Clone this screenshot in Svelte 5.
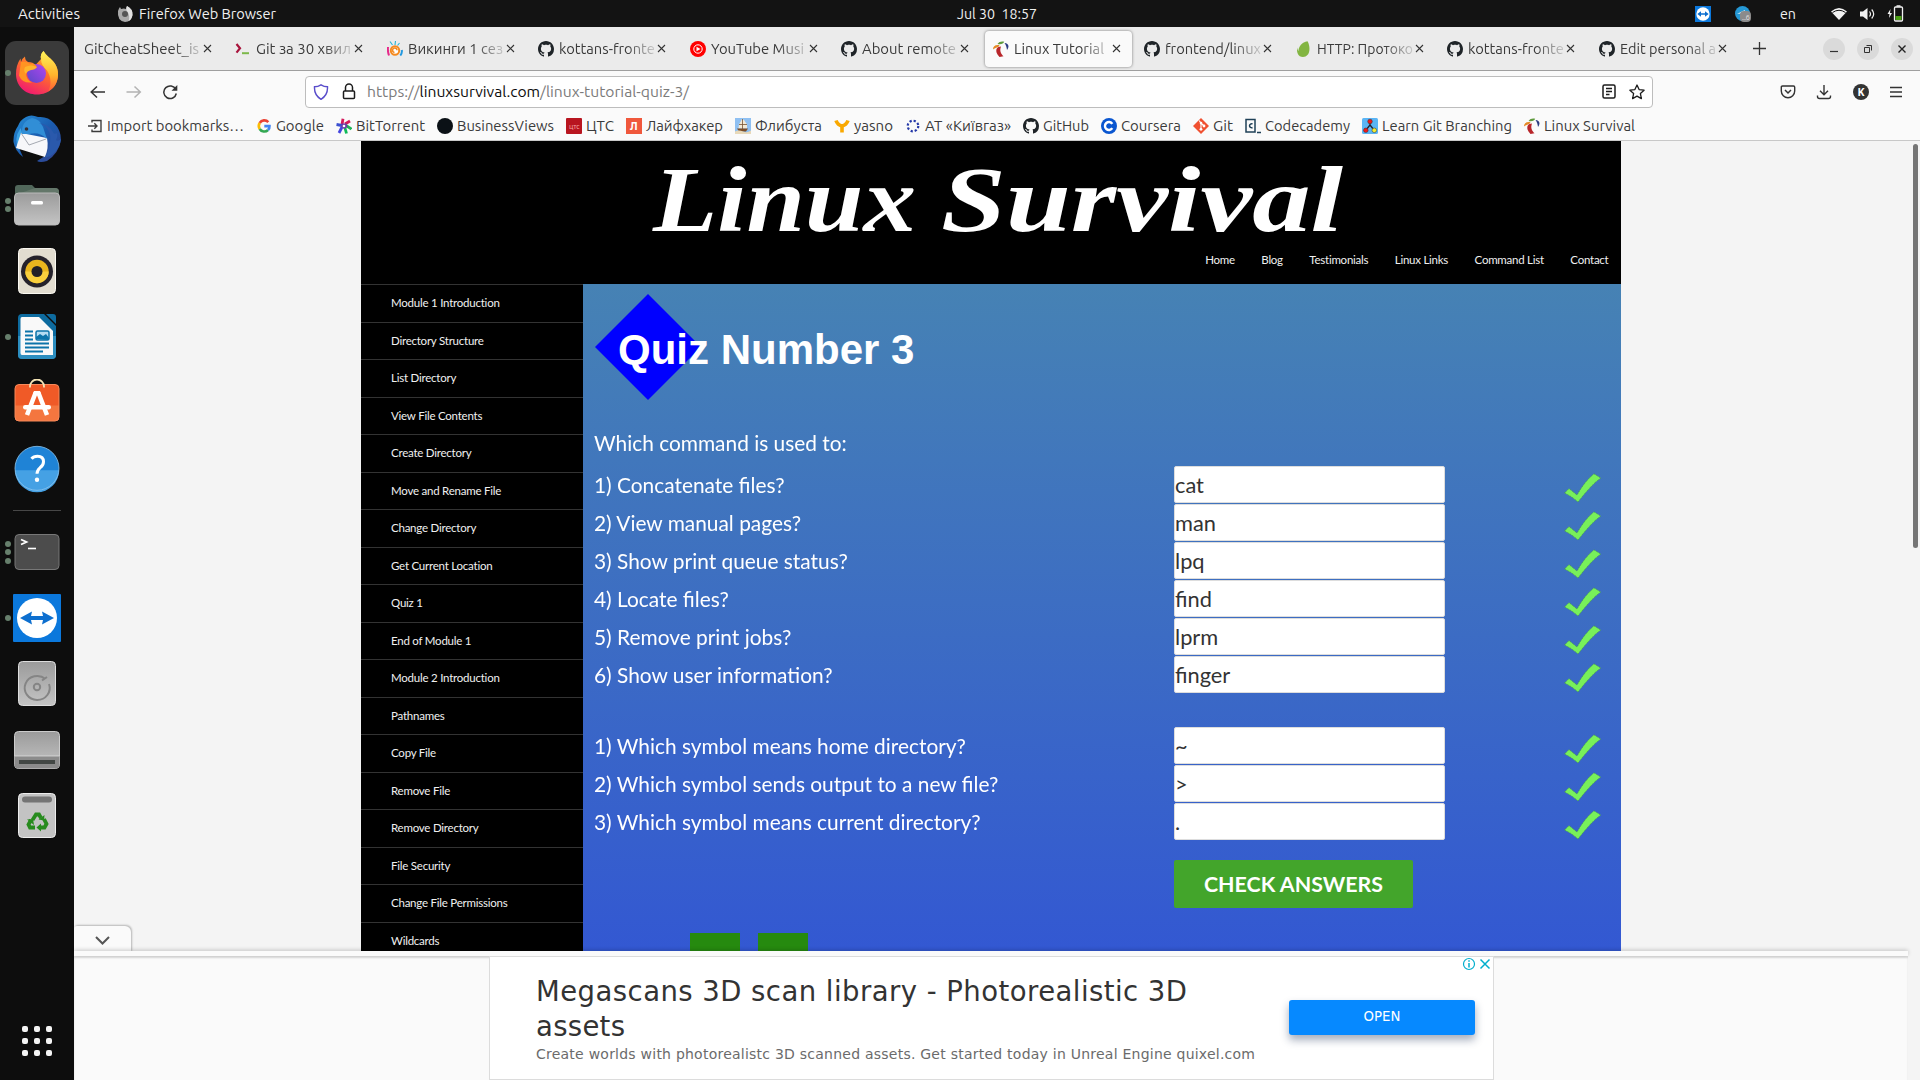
<script>
  const tabs = [
    { t: 'GitCheatSheet_is', w: 115, i: '' },
    { t: 'Git за 30 хвил', w: 95, i: 'prompt' },
    { t: 'Викинги 1 сез', w: 95, i: 'viking' },
    { t: 'kottans-fronte', w: 96, i: 'github' },
    { t: 'YouTube Musi', w: 93, i: 'yt' },
    { t: 'About remote', w: 94, i: 'github' },
    { t: 'Linux Tutorial', w: 90, i: 'palm', active: true },
    { t: 'frontend/linux', w: 96, i: 'github' },
    { t: 'HTTP: Протоко', w: 96, i: 'leaf' },
    { t: 'kottans-fronte', w: 96, i: 'github' },
    { t: 'Edit personal a', w: 96, i: 'github' }
  ];
  const bookmarks = [
    { t: 'Import bookmarks…', w: 137, i: 'import' },
    { t: 'Google', w: 48, i: 'google' },
    { t: 'BitTorrent', w: 69, i: 'star6' },
    { t: 'BusinessViews', w: 97, i: 'black' },
    { t: 'ЦТС', w: 28, i: 'cts' },
    { t: 'Лайфхакер', w: 77, i: 'life' },
    { t: 'Флибуста', w: 67, i: 'ship' },
    { t: 'yasno', w: 39, i: 'yasno' },
    { t: 'АТ «Київгаз»', w: 86, i: 'dots' },
    { t: 'GitHub', w: 46, i: 'github' },
    { t: 'Coursera', w: 60, i: 'coursera' },
    { t: 'Git', w: 20, i: 'git' },
    { t: 'Codecademy', w: 85, i: 'code' },
    { t: 'Learn Git Branching', w: 130, i: 'branch' },
    { t: 'Linux Survival', w: 91, i: 'palm' }
  ];
  const dockTop = [
    { n: 'firefox', dots: 1 }, { n: 'bird', dots: 0 }, { n: 'files', dots: 2 },
    { n: 'music', dots: 0 }, { n: 'writer', dots: 1 }, { n: 'store', dots: 0 }, { n: 'help', dots: 0 }
  ];
  const dockBottom = [
    { n: 'term', dots: 3 }, { n: 'tv', dots: 1 }, { n: 'disk', dots: 0 }, { n: 'drive', dots: 0 }, { n: 'trash', dots: 0 }
  ];
  const nav = ['Home', 'Blog', 'Testimonials', 'Linux Links', 'Command List', 'Contact'];
  const lessons = [
    'Module 1 Introduction', 'Directory Structure', 'List Directory', 'View File Contents', 'Create Directory',
    'Move and Rename File', 'Change Directory', 'Get Current Location', 'Quiz 1', 'End of Module 1',
    'Module 2 Introduction', 'Pathnames', 'Copy File', 'Remove File', 'Remove Directory', 'File Security',
    'Change File Permissions', 'Wildcards'
  ];
  const groups = [
    [
      ['1) Concatenate files?', 'cat'], ['2) View manual pages?', 'man'], ['3) Show print queue status?', 'lpq'],
      ['4) Locate files?', 'find'], ['5) Remove print jobs?', 'lprm'], ['6) Show user information?', 'finger']
    ],
    [
      ['1) Which symbol means home directory?', '~'], ['2) Which symbol sends output to a new file?', '>'],
      ['3) Which symbol means current directory?', '.']
    ]
  ];
</script>

{#snippet fit(t, w)}
  <svg class="fit" width={w} height="22"><text x="0" y="16" textLength={w} lengthAdjust="spacingAndGlyphs">{t}</text></svg>
{/snippet}

{#snippet icon(n)}
  <svg class="ico" width="16" height="16" viewBox="0 0 16 16">
    {#if n === 'github'}
      <path fill="#1f2428" fill-rule="evenodd" d="M8 0C3.58 0 0 3.58 0 8c0 3.54 2.29 6.53 5.47 7.59.4.07.55-.17.55-.38 0-.19-.01-.82-.01-1.49-2.01.37-2.53-.49-2.69-.94-.09-.23-.48-.94-.82-1.13-.28-.15-.68-.52-.01-.53.63-.01 1.08.58 1.23.82.72 1.21 1.87.87 2.33.66.07-.52.28-.87.51-1.07-1.78-.2-3.64-.89-3.64-3.95 0-.87.31-1.59.82-2.15-.08-.2-.36-1.02.08-2.12 0 0 .67-.21 2.2.82.64-.18 1.32-.27 2-.27s1.36.09 2 .27c1.53-1.04 2.2-.82 2.2-.82.44 1.1.16 1.92.08 2.12.51.56.82 1.27.82 2.15 0 3.07-1.87 3.75-3.65 3.95.29.25.54.73.54 1.48 0 1.07-.01 1.93-.01 2.2 0 .21.15.46.55.38A8.01 8.01 0 0 0 16 8c0-4.42-3.58-8-8-8z" />
    {:else if n === 'prompt'}
      <path d="M1.5 3 5 7.3 1.5 11.6" fill="none" stroke="#a8143c" stroke-width="2.2" /><path d="M7 12.2h7" stroke="#7cb84a" stroke-width="2" />
    {:else if n === 'viking'}
      <path d="M3 .5 5.500 4M8.500 0 8 4M12.500 2l-2 2.500" stroke="#23b5d3" stroke-width="1.1" />
      <circle cx="8" cy="9.500" r="4.200" fill="#fff" stroke="#f58a1f" stroke-width="2" />
      <path d="M7.500 11.500a2.200 2.200 0 1 1 2.500-2.200" fill="none" stroke="#f58a1f" stroke-width="1.500" />
      <path d="M1 6q-.500 4.500 1 8.500" fill="none" stroke="#e6298a" stroke-width="2" /><path d="M14.800 9q.500 3.500-1.500 5.500" fill="none" stroke="#2098e0" stroke-width="2" />
    {:else if n === 'yt'}
      <circle cx="8" cy="8" r="8" fill="#f00" /><circle cx="8" cy="8" r="4.2" fill="none" stroke="#fff" stroke-width="1" /><path d="M6.5 5.7 10.4 8l-3.9 2.3z" fill="#fff" />
    {:else if n === 'palm'}
      <path d="M4.500 3C6 .5 9 0 11.200.8 10.500 2.800 8 3.800 4.500 3z" fill="#5f9a3c" />
      <path d="M0 8.500C0 5 2.500 3.500 6.500 4.200 5.500 6.800 3 6 0 8.500z" fill="#e58a26" />
      <path d="M3.500 8c1-1.800 2.500-2.500 4.500-2.500C6.500 9.500 7.500 12.500 10.500 15.200L6.500 16C3.500 13 2.800 10.500 3.500 8z" fill="#b8262a" />
      <path d="M11.500 2c3.500 0 5.500 3 2.500 7C13.700 6 13 4 11.500 2z" fill="#2c3c83" />
    {:else if n === 'leaf'}
      <path d="M11.500.2c3 5 3.500 15.300-4.500 15.800C2 16 .4 11 1.200 6.500c.200 1.500.5 2.500 1.300 3.500C2.500 5.500 6 1 11.500.2z" fill="#82b541" />
    {:else if n === 'import'}
      <path d="M5 4.500V2.500h9v11H5v-2M1 8h9M7.300 5.200 10 8l-2.700 2.800" fill="none" stroke="#3c3c3c" stroke-width="1.400" />
    {:else if n === 'google'}
      <g fill="none" stroke-width="2.600"><path d="M12.300 4.200A5.300 5.300 0 0 0 3.700 5" stroke="#ea4335" /><path d="M3.700 5a5.600 5.600 0 0 0 0 6" stroke="#fbbc05" /><path d="M3.700 11a5.300 5.300 0 0 0 8.300 1" stroke="#34a853" /><path d="M12 12a5 5 0 0 0 1.500-3.900H8.300" stroke="#4285f4" /></g>
    {:else if n === 'star6'}
      <g fill="none" stroke-width="2.800" stroke-linejoin="miter">
        <path d="M7 .8 6 6.500" stroke="#d41b5c" /><path d="M.5 6.500 6 7.500" stroke="#3a50d0" /><path d="M9 6l5-3" stroke="#d41b5c" />
        <path d="M10 7.500l5.500 3.500" stroke="#20b357" /><path d="M6 9l-3 6" stroke="#4545df" /><path d="M9 10l1.500 5.500" stroke="#10ba5a" />
      </g>
      <path d="M6 5.500h4.500l1 3.500-3.500 2L5 8.500z" fill="#6a3ba8" /><circle cx="8" cy="8" r="1.300" fill="#fff" />
    {:else if n === 'black'}
      <circle cx="8" cy="8" r="8" fill="#0b1116" />
    {:else if n === 'cts'}
      <rect width="16" height="16" rx="1" fill="#b8151f" /><text class="mini" x="3" y="11" font-size="7" fill="#f3a0a0">цтс</text>
    {:else if n === 'life'}
      <rect width="16" height="16" fill="#f0583c" /><text class="mini bold" x="4" y="12" font-size="10.500" fill="#fff">Л</text>
    {:else if n === 'ship'}
      <rect width="16" height="16" fill="#8fc0f2" /><path d="M7 1l2 1 3 4.500v4H3.500l.5-4z" fill="#f2e9d5" /><path d="M7.500 1v10M4 6.500h8" stroke="#775434" stroke-width=".800" /><path d="M2 10.500h11l-2 3H4z" fill="#7c4e28" /><path d="M0 13.500q4-2 8 0t8-1v3.500H0z" fill="#e8d9ba" />
    {:else if n === 'yasno'}
      <path d="M2 2.500q1.500 4.500 6 5.500 4.500-1 6-5.500M8 8v6.500" fill="none" stroke="#f9a800" stroke-width="3.600" />
    {:else if n === 'dots'}
      <circle cx="8" cy="8" r="5.300" fill="none" stroke="#2438a8" stroke-width="2.200" stroke-dasharray="2.200 1.960" />
    {:else if n === 'coursera'}
      <circle cx="8" cy="8" r="8" fill="#0a56d0" /><path d="M11.300 5.800a4 4 0 1 0 0 4.400" fill="none" stroke="#fff" stroke-width="2.400" />
    {:else if n === 'git'}
      <path d="M8 0l8 8-8 8-8-8z" fill="#f05030" /><path d="M6 2.500 8 5v6M8 5l3 3" stroke="#fff" stroke-width="1.100" fill="none" /><circle cx="8" cy="11.300" r="1.400" fill="#fff" /><circle cx="11" cy="8" r="1.400" fill="#fff" /><circle cx="8" cy="5" r="1.300" fill="#fff" />
    {:else if n === 'code'}
      <rect x="1" y="1.500" width="9" height="12.500" fill="none" stroke="#1f4057" stroke-width="1.500" /><path d="M7.500 6a2 2 0 1 0 0 3.500M12 14.500h4" fill="none" stroke="#1f4057" stroke-width="1.500" />
    {:else if n === 'branch'}
      <rect width="16" height="16" rx="1.500" fill="#5bb5f5" /><path d="M8 4v4M8 7l-4 5M8 7l4 5" stroke="#223" stroke-width="1.300" /><circle cx="8" cy="3.500" r="2.300" fill="#f01818" stroke="#333" stroke-width=".500" /><circle cx="3.800" cy="12.300" r="2.300" fill="#f01818" stroke="#333" stroke-width=".500" /><circle cx="12.300" cy="12.300" r="2.300" fill="#f5ee30" stroke="#333" stroke-width=".500" />
    {/if}
  </svg>
{/snippet}

{#snippet dockIcon(n)}
  <svg width="48" height="48" viewBox="0 0 48 48">
    {#if n === 'firefox'}
      <path d="M28 10Q27 5 30.500 2q2 3.500 5 6c5 4 9.500 9 9.500 17.500C45 37 36 45.500 24 45.500S3 37 3 25q0-9 4.500-15.500l.5 3.500Q9.500 9 12 7.500q0 4 3 5.500 5 0 7.500 3z" fill="url(#fx)" />
      <path d="M28 10Q27 5 30.500 2q2 3.500 5 6c5 4 9.500 9 9.500 17.500 0 8-4 14-10 17 4-6 3-15-1-21-4-4-6-7-6-11.500z" fill="url(#fy)" />
      <circle cx="23.500" cy="24.500" r="9.500" fill="url(#fp)" />
      <path d="M8 13q6-1 9 2 4-1 6 1.500 2 2-2 3l-5 1q-3 1-3 4 0 6 6 9-10 1-13-7z" fill="#ff9422" />
      <path d="M12 18q6-3 12 0-2 3-6 3-4 1-5 4-3-3-1-7z" fill="#ffb52c" />
    {:else if n === 'bird'}
      <path d="M13 2q5-3 12 0 10-1 16 6 7 7 7 17-2 13-14 21-7 2-10 0l8-5L6 33l4 9Q2 36 .5 27 0 18 5 11 7 5 13 2z" fill="url(#tb)" />
      <path d="M6 35q-6-11 1.500-22l3 9z" fill="#3ba3e4" />
      <path d="M8 18 34 23q2 10-2 19L3 33z" fill="#f7f7fa" />
      <path d="M8 18l8 12 17-6" fill="none" stroke="#a5a9b2" stroke-width="1" />
      <path d="M9 19Q8 6 19 3q8 1 11 9l4 12q-8-8-18-5-4 0-7 0z" fill="#318ed6" />
      <path d="M26 8q13 5 11 19-1 9-5 15 4 1 8-3 7-6 8-15-3 3-5 1 2-3 1-7-3 2-4-1-3-7-14-9z" fill="#2a59ac" />
      <circle cx="13.500" cy="14" r="1.800" fill="#362c30" />
    {:else if n === 'files'}
      <path d="M2 7q0-3 3-3h14l3 3h20q4 0 4 4v8H2z" fill="#51675a" /><path d="M22 7h20q4 0 4 4v5H2v-2z" fill="#64776a" />
      <rect x="1.500" y="12" width="45" height="32" rx="4" fill="url(#gr)" stroke="#bbb" /><rect x="18" y="20" width="12" height="3.500" rx="1.500" fill="#fff" />
    {:else if n === 'music'}
      <rect x="5.500" y="1.500" width="37" height="45" rx="4" fill="#e2ddd0" stroke="#faf8f1" /><circle cx="24" cy="24.500" r="16" fill="#25222b" /><circle cx="24" cy="24.500" r="11.700" fill="#e9b51e" /><path d="M12.300 24.500a11.700 11.700 0 0 0 23.400 0z" fill="#f9cf3d" /><circle cx="24" cy="24.500" r="5.500" fill="#222027" />
    {:else if n === 'writer'}
      <path d="M9 1h22l12 12v29q0 4-4 4H9q-4 0-4-4V5q0-4 4-4z" fill="#0d6b9f" /><path d="M5 23h38v19q0 4-4 4H9q-4 0-4-4z" fill="#2c8ec0" /><path d="M33 1h7q3 0 3 3v7z" fill="#0d6b9f" />
      <path d="M9 4h17l14 14v24H9q-1.500 0-1.500-2V6Q7.500 4 9 4z" fill="#f9f9f9" />
      <path d="M12 18.500h8M12 22.500h8M12 26.500h8M12 30.500h24M12 34.500h24M12 38.500h18" stroke="#0c74aa" stroke-width="2" /><rect x="23" y="18" width="13" height="9" rx="1.500" fill="#b5dcf2" stroke="#0c74aa" stroke-width="1.500" /><path d="M23 26v-2l4-3 3 2 3-2 3 4v2z" fill="#0c74aa" />
    {:else if n === 'store'}
      <g transform="translate(0 -.5)"><rect x="2" y="6" width="44" height="36.500" rx="4" fill="#f05a27" /><path d="M2 27h44v11.500q0 4-4 4H6q-4 0-4-4z" fill="#f4763f" /><rect x="2" y="6" width="44" height="36.500" rx="4" fill="none" stroke="#f6895a" />
      <path d="M17 9V8a7 7 0 0 1 14 0v1" fill="none" stroke="#f3e3b5" stroke-width="1.800" /><path d="M14 36.500 22.700 14M25.300 14 34 36.500" fill="none" stroke="#fff" stroke-width="4.500" /><path d="M21 12.500h6l1 3h-8z" fill="#fff" /><rect x="10" y="26.500" width="28" height="4.500" rx="2.200" fill="#fff" /></g>
    {:else if n === 'help'}
      <g transform="translate(0 -.7)"><circle cx="24" cy="24" r="22" fill="#1f83d6" /><path d="M2 26a22 22 0 0 0 44 0z" fill="#45a1e4" /><circle cx="24" cy="24" r="22" fill="none" stroke="#8bc4ee" stroke-width=".800" />
      <path d="M18.500 14.500q2-2.500 6-2.500 6 0 6 5.500 0 3.500-3.500 6-3 2.500-3 6" fill="none" stroke="#fff" stroke-width="3" /><circle cx="24" cy="35.500" r="2.200" fill="#fff" /></g>
    {:else if n === 'term'}
      <rect x="2" y="6.500" width="44" height="35" rx="4" fill="#4c4c4c" stroke="#777" /><path d="M8 11.500l5.500 2.500L8 16.500" fill="none" stroke="#fff" stroke-width="1.800" /><path d="M15 20.500h8" stroke="#fff" stroke-width="1.600" />
    {:else if n === 'tv'}
      <rect width="48" height="48" rx="1" fill="#0b78dc" /><circle cx="24" cy="24" r="20" fill="#fff" /><path d="M7 24l12-6.500-1 4.500h12l-1-4.500L41 24l-12 6.500 1-4.500H18l1 4.500z" fill="#0d6fcf" />
    {:else if n === 'disk'}
      <rect x="5.500" y="1.500" width="37" height="44" rx="4" fill="url(#gr)" stroke="#ddd" /><path d="M32.500 19A12.500 12 0 1 0 36 24M29 20.500l5-3.500" fill="none" stroke="#858585" stroke-width="2" /><circle cx="24" cy="27" r="3.200" fill="none" stroke="#858585" stroke-width="2" />
    {:else if n === 'drive'}
      <rect x="1.500" y="5.500" width="45" height="37" rx="4" fill="url(#gr)" stroke="#ccc" /><path d="M1.500 30h45v8.500q0 4-4 4h-37q-4 0-4-4z" fill="#8b8b8b" /><path d="M1.500 30h45" stroke="#ddd" stroke-width=".800" /><path d="M6 36h36" stroke="#424744" stroke-width="4" />
    {:else if n === 'trash'}
      <rect x="5.500" y="1.500" width="37" height="44" rx="4" fill="#c3c3c3" stroke="#ececec" /><rect x="9" y="4.500" width="30" height="6" rx="3" fill="#757575" />
      <g fill="none" stroke="#278b1e" stroke-width="3.800"><path d="M19.500 28l3.500-5.500h3l2 3.500" /><path d="M31 27l2.500 5-2 3.500H26" /><path d="M22 35.500h-5l-1.500-3L18 28" /></g><path d="M25.500 27.500l5.500 1 .500-5.500zM28 31.500v8l-4.500-4zM14 27.500l6-.500 1 6z" fill="#278b1e" />
    {/if}
  </svg>
{/snippet}

<div class="screen">
  <svg class="defs" width="0" height="0">
    <defs>
      <linearGradient id="fx" x1=".8" y1="0" x2=".3" y2="1"><stop offset="0" stop-color="#ffc32d" /><stop offset=".5" stop-color="#ff6a2d" /><stop offset="1" stop-color="#f01872" /></linearGradient>
      <linearGradient id="fy" x1="0" y1="0" x2="0" y2="1"><stop offset="0" stop-color="#fff45a" /><stop offset=".6" stop-color="#ffb32c" /><stop offset="1" stop-color="#ff5a35" /></linearGradient>
      <linearGradient id="fp" x1="1" y1="0" x2="0" y2="1"><stop offset="0" stop-color="#b345f0" /><stop offset="1" stop-color="#5a48c8" /></linearGradient>
      <linearGradient id="tb" x1="0" y1="0" x2="1" y2="1"><stop offset="0" stop-color="#258fd8" /><stop offset=".5" stop-color="#1b5bae" /><stop offset="1" stop-color="#35418e" /></linearGradient>
      <linearGradient id="gr" x1="0" y1="0" x2="0" y2="1"><stop offset="0" stop-color="#9b9b9b" /><stop offset="1" stop-color="#c4c4c4" /></linearGradient>
    </defs>
  </svg>

  <header class="panel">
    <div class="left">
      {@render fit('Activities', 62)}
      <svg class="foxmini" width="16" height="16" viewBox="0 0 16 16"><path d="M1 5q1-3 2-4l1 2q3-1 5 0 0-2 1-3 6 3 5.500 9-1 7-7.500 7Q0 15 1 5z" fill="#aaa" /><path d="M10 0q6 3 5.500 9-1 5-4 6 2-5-1-9-2-2-.500-6z" fill="#e2e2e2" /><circle cx="8" cy="8" r="3" fill="#555" /></svg>
      {@render fit('Firefox Web Browser', 137)}
    </div>
    <div class="clock">{@render fit('Jul 30  18:57', 80)}</div>
    <div class="tray">
      <svg width="16" height="16" viewBox="0 0 48 48"><rect width="48" height="48" fill="#0b78dc" /><circle cx="24" cy="24" r="20" fill="#fff" /><path d="M7 24l11-8v6h12v-6l11 8-11 8v-6H18v6z" fill="#0d6fcf" /></svg>
      <svg class="tg" width="16" height="16" viewBox="0 0 16 16"><circle cx="7.500" cy="7.500" r="7.500" fill="#2598d5" /><path d="M2 8l8-4-1 3z" fill="#fff" /><rect x="5" y="5" width="11" height="11" rx="4" fill="#8b8b8b" /><text class="mini" x="7" y="14" font-size="7" fill="#ddd">..6</text></svg>
      <span class="lang">{@render fit('en', 16)}</span>
      <svg class="wifi" width="16" height="16" viewBox="0 0 16 16"><path d="M0 5.500Q8-1.500 16 5.500L8 14z" fill="#f2f2f2" /><path d="M1.500 6.500q6.500-4.500 13 0" fill="none" stroke="#131313" stroke-width="1" /></svg>
      <svg class="vol" width="16" height="16" viewBox="0 0 16 16"><path d="M0 5.500h3L7.500 2v12L3 10.500H0z" fill="#f2f2f2" /><path d="M9.500 5.500q2 2.500 0 5M11.700 3.500q4 4.500 0 9" fill="none" stroke="#f2f2f2" stroke-width="1.200" /></svg>
      <svg class="bat" width="17" height="17" viewBox="0 0 17 17"><path d="M3.500 4 .5 9h2l-.5 4 3-5H3z" fill="#f2f2f2" /><rect x="7.500" y="2" width="8" height="14" rx="1" fill="none" stroke="#f2f2f2" stroke-width="1.300" /><path d="M9.500 1h4" stroke="#f2f2f2" stroke-width="1.500" /><rect x="8.500" y="11" width="6" height="4" fill="#4ba014" /></svg>
    </div>
  </header>

  <div class="desk">
    <aside class="dock">
      {#each dockTop as d, k}
        <div class="tile" class:on={k === 0}><span class="dots">{#each Array(d.dots) as _}<i></i>{/each}</span>{@render dockIcon(d.n)}</div>
      {/each}
      <hr />
      {#each dockBottom as d}
        <div class="tile"><span class="dots">{#each Array(d.dots) as _}<i></i>{/each}</span>{@render dockIcon(d.n)}</div>
      {/each}
      <div class="apps">{#each Array(9) as _}<i></i>{/each}</div>
    </aside>

    <main class="browser">
      <div class="tabs">
        {#each tabs as tab}
          <div class="tab" class:active={tab.active}>
            {#if tab.i}{@render icon(tab.i)}{/if}
            <span class="label">{@render fit(tab.t, tab.w)}</span>
            <svg class="x" width="9" height="9" viewBox="0 0 9 9"><path d="M1 1l7 7M8 1 1 8" stroke="#333" stroke-width="1.100" /></svg>
          </div>
        {/each}
        <svg class="plus" width="13" height="13" viewBox="0 0 13 13"><path d="M6.500 0v13M0 6.500h13" stroke="#333" stroke-width="1.300" /></svg>
        <div class="win">
          <span><svg width="10" height="10"><path d="M1 7.500h8" stroke="#333" stroke-width="1.200" /></svg></span>
          <span><svg width="10" height="10"><path d="M1.500 3.500h5v5h-5zM3.500 1.500h5v5" fill="none" stroke="#333" /></svg></span>
          <span><svg width="10" height="10"><path d="M1.500 1.500l7 7M8.500 1.500l-7 7" stroke="#222" stroke-width="1.400" /></svg></span>
        </div>
      </div>

      <div class="toolbar">
        <svg class="back" width="16" height="16" viewBox="0 0 16 16"><path d="M15 8H1.500M7 2.500 1.200 8 7 13.500" fill="none" stroke="#333" stroke-width="1.500" /></svg>
        <svg class="fwd" width="16" height="16" viewBox="0 0 16 16"><path d="M.5 8H14M8.500 2.500 14.300 8l-5.800 5.500" fill="none" stroke="#b3b3b3" stroke-width="1.500" /></svg>
        <svg class="reload" width="16" height="16" viewBox="0 0 16 16"><path d="M13.800 5.500A6.300 6.300 0 1 0 14.300 9.500" fill="none" stroke="#333" stroke-width="1.500" /><path d="M15.300 1v5.700H9.500z" fill="#333" /></svg>
        <div class="url">
          <svg width="16" height="16" viewBox="0 0 16 16"><path d="M8 .8q3 2 6.500 2Q15 11 8 15.300 1 11 1.500 2.800 5 2.800 8 .8z" fill="none" stroke="#5a4ecb" stroke-width="1.400" /></svg>
          <svg class="lock" width="14" height="17" viewBox="0 0 14 17"><path d="M3.500 8V4.500a3.500 3.500 0 0 1 7 0V8" fill="none" stroke="#1c1c1c" stroke-width="1.500" /><rect x="1.500" y="8" width="11" height="7.500" rx="1" fill="none" stroke="#1c1c1c" stroke-width="1.500" /></svg>
          <svg class="addr" width="323" height="22"><text x="0" y="16" textLength="322" lengthAdjust="spacingAndGlyphs">https://<tspan class="host">linuxsurvival.com</tspan>/linux-tutorial-quiz-3/</text></svg>
          <svg class="reader" width="14" height="15" viewBox="0 0 14 15"><rect x="1" y="1" width="12" height="13" rx="1.500" fill="none" stroke="#1c1c1c" stroke-width="1.500" /><path d="M4 4.500h6M4 7.500h6M4 10.500h3.500" stroke="#1c1c1c" stroke-width="1.300" /></svg>
          <svg width="16" height="16" viewBox="0 0 16 16"><path d="M8 1l2.100 4.600 5 .6-3.700 3.400 1 5L8 12.100l-4.400 2.500 1-5L.9 6.200l5-.6z" fill="none" stroke="#1c1c1c" stroke-width="1.300" stroke-linejoin="round" /></svg>
        </div>
        <div class="tools">
          <svg width="16" height="16" viewBox="0 0 16 16"><path d="M2.500 2h11q1.200 0 1.200 1.200V7a6.700 6.700 0 0 1-13.400 0V3.200Q1.300 2 2.500 2z" fill="none" stroke="#333" stroke-width="1.400" /><path d="M5 6l3 3 3-3" fill="none" stroke="#333" stroke-width="1.500" /></svg>
          <svg width="16" height="16" viewBox="0 0 16 16"><path d="M8 1v9.500M4 6.700l4 4 4-4M1.500 11.500v1q0 2 2 2h9q2 0 2-2v-1" fill="none" stroke="#333" stroke-width="1.400" /></svg>
          <svg width="16" height="16" viewBox="0 0 16 16"><circle cx="8" cy="8" r="8" fill="#333" /><text class="mini bold" x="4.500" y="11.800" font-size="10.500" fill="#fff">K</text></svg>
          <svg width="14" height="16" viewBox="0 0 14 16"><path d="M1 3.500h12M1 8h12M1 12.500h12" stroke="#333" stroke-width="1.400" /></svg>
        </div>
      </div>

      <div class="bookmarks">
        {#each bookmarks as b}
          <div class="bm">{@render icon(b.i)}{@render fit(b.t, b.w)}</div>
        {/each}
      </div>

      <div class="view">
        <div class="site">
          <div class="masthead">
            <svg class="logo" width="720" height="90"><text x="14" y="90" textLength="263" lengthAdjust="spacingAndGlyphs">Linux</text><text x="302" y="90" textLength="402" lengthAdjust="spacingAndGlyphs">Survival</text></svg>
            <nav>{#each nav as n}<a href="#top">{n}</a>{/each}</nav>
          </div>
          <div class="cols">
            <ul class="side">{#each lessons as l}<li>{l}</li>{/each}</ul>
            <section class="quiz">
              <div class="title">
                <svg width="106" height="106"><path d="M53 0l53 53-53 53L0 53z" fill="#00f" /></svg>
                <h1>Quiz Number 3</h1>
              </div>
              <p><span class="q">Which command is used to:</span></p>
              {#each groups as g}
                <div class="group">
                  {#each g as row}
                    <div class="row">
                      <span class="q">{row[0]}</span>
                      <span class="field">{row[1]}</span>
                      <svg width="38" height="30" viewBox="0 0 38 30"><path d="M.5 20 5 15.500l8 6.500Q21 8 30 .8l6.800 4.200Q28 11 14 29 8 23.500.5 20z" fill="#78f05a" stroke="#3d8b49" stroke-width=".800" stroke-dasharray="1 1" /></svg>
                    </div>
                  {/each}
                </div>
              {/each}
              <button>CHECK ANSWERS</button>
              <div class="steps"><i></i><i></i></div>
            </section>
          </div>
        </div>
        <div class="track"><div class="thumb"></div></div>

        <div class="anchor">
          <div class="collapse"><svg width="15" height="9" viewBox="0 0 15 9"><path d="M1 1l6.500 6.500L14 1" fill="none" stroke="#555" stroke-width="2" /></svg></div>
          <div class="strip"></div>
          <div class="adrow">
            <div class="ad">
              <div class="copy">
                <svg width="740" height="123"><g class="big"><text x="0" y="43.500" textLength="651" lengthAdjust="spacing">Megascans 3D scan library - Photorealistic 3D</text><text x="0" y="78.500" textLength="89" lengthAdjust="spacing">assets</text></g><text class="sub" x="0" y="102" textLength="719" lengthAdjust="spacing">Create worlds with photorealistc 3D scanned assets. Get started today in Unreal Engine quixel.com</text></svg>
              </div>
              <div class="open">OPEN</div>
              <svg class="choices" width="30" height="14" viewBox="0 0 30 14"><circle cx="7" cy="7" r="5.500" fill="none" stroke="#00aecd" stroke-width="1.200" /><path d="M7 6v4.500M7 3.300v1.500M18.500 2.500l9 9M27.500 2.500l-9 9" stroke="#00aecd" stroke-width="1.500" /></svg>
            </div>
          </div>
        </div>
      </div>
    </main>
  </div>
</div>

<style>
  :global(body) { margin: 0; overflow: hidden; }
  .screen { width: 1920px; height: 1080px; overflow: hidden; background: #0d0d0d; font-family: Ubuntu, "Noto Sans", sans-serif; display: flex; flex-direction: column; }
  .screen :global(*) { box-sizing: border-box; }
  svg { display: block; flex: none; }
  .defs { position: absolute; }
  .mini { font-family: "Noto Sans", sans-serif; }
  .bold { font-weight: 700; }
  .fit { overflow: visible; }
  .fit text { font-size: 14.300px; fill: #3a3a3a; white-space: pre; }

  .panel { height: 27px; flex: none; background: #131313; display: grid; grid-template-columns: 957px 1fr auto; align-items: center; }
  .panel .fit text { fill: #f0f0f0; }
  .left { display: flex; align-items: center; padding-left: 18px; }
  .foxmini { margin: 0 6px 0 37px; }
  .tray { display: flex; align-items: center; padding-right: 16px; }
  .tg { margin-left: 24px; }
  .lang { margin: 0 35px 0 29px; }
  .vol { margin-left: 13px; }
  .bat { margin-left: 11px; }

  .desk { display: flex; height: 1053px; }
  .dock { width: 74px; flex: none; background: #0d0d0d; display: flex; flex-direction: column; align-items: center; gap: 2px; padding-top: 14px; }
  .tile { width: 64px; height: 64px; flex: none; border-radius: 11px; display: grid; grid-template-columns: 8px 48px; align-items: center; }
  .on { background: #3a3a3a; }
  .dots { display: flex; flex-direction: column; gap: 2.500px; }
  .dots i { width: 6px; height: 6px; border-radius: 50%; background: #667f6c; }
  .dock hr { width: 48px; height: 1px; border: 0; background: #474747; margin: 7px 0; flex: none; }
  .apps { margin-top: 176px; display: grid; grid-template-columns: repeat(3, 6px); gap: 6px; }
  .apps i { width: 6px; height: 6px; border-radius: 2px; background: #f4f4f4; }

  .browser { width: 1846px; display: flex; flex-direction: column; background: #fafafa; }
  .tabs { height: 44px; flex: none; background: #ebebeb; border-bottom: 1px solid #9f9f9f; display: flex; align-items: center; padding-left: 1.500px; }
  .tab { width: 151.500px; height: 36px; flex: none; display: flex; align-items: center; gap: 5px; padding: 0 15.500px 0 8px; border-radius: 4px; }
  .tab.active { background: #fafafa; box-shadow: 0 0 3px rgba(0, 0, 0, .5); width: 147.500px; margin-right: 4px; padding-right: 11.500px; }
  .label { flex: 1; overflow: hidden; mask-image: linear-gradient(90deg, #000 calc(100% - 30px), rgba(0, 0, 0, .15)); }
  .tab .x { margin-left: -4px; }
  .plus { margin-left: 11px; }
  .win { margin-left: auto; display: flex; gap: 12px; padding-right: 7px; }
  .win span { width: 22px; height: 22px; border-radius: 50%; background: #dadada; display: grid; place-items: center; }

  .toolbar { height: 41px; flex: none; display: flex; align-items: center; padding: 0 17px 0 16px; }
  .fwd, .reload { margin-left: 20px; }
  .url { width: 1348px; height: 32px; margin-left: 127px; background: #fff; border: 1px solid #bdbdbd; border-radius: 4px; display: flex; align-items: center; padding: 0 7px; }
  .lock { margin-left: 13px; }
  .addr { margin-left: 11px; }
  .addr text { font-size: 14.500px; fill: #7b7b7b; }
  .addr .host { fill: #0c0c0c; }
  .reader { margin: 0 13px 0 auto; }
  .tools { margin-left: auto; display: flex; gap: 20.300px; }
  .bookmarks { height: 29px; flex: none; display: flex; align-items: center; gap: 12px; padding-left: 12.500px; border-bottom: 1px solid #c8c8c8; }
  .bm { display: flex; align-items: center; gap: 4px; }

  .view { height: 939px; flex: none; background: #f4f4f4; position: relative; display: flex; justify-content: space-between; padding-left: 287px; }
  .site { width: 1260px; height: 810px; overflow: hidden; font-family: Lato, sans-serif; color: #fff; background: #000; }
  .masthead { height: 143px; display: flex; flex-direction: column; }
  .logo { margin: 0 0 0 278px; overflow: visible; }
  .logo text { font: italic 700 93px "Lucida Calligraphy", "Liberation Serif", serif; fill: #fff; }
  .masthead nav { display: flex; justify-content: flex-end; gap: 26.500px; padding: 21px 12.500px 0 0; }
  nav a { color: #f0f0f0; text-decoration: none; font-size: 11.500px; line-height: 16px; letter-spacing: -.25px; }
  .cols { display: flex; }
  .side { width: 222px; flex: none; margin: 0; padding: 0; list-style: none; }
  .side li { height: 37.530px; line-height: 36px; border-top: 1px solid #333; padding-left: 30px; font-size: 11.500px; letter-spacing: -.23px; color: #f0f0f0; }
  .quiz { flex: 1; height: 667px; overflow: hidden; background: linear-gradient(#4682b4, #3358d2); padding: 10px 19px 0 12px; font-size: 22px; }
  .title { display: flex; align-items: center; height: 106px; }
  .title h1 { font: 700 42px "Liberation Sans", sans-serif; margin: 6px 0 0 -83px; position: relative; }
  .quiz p { margin: 29px 0 0; height: 37px; line-height: 28px; }
  .q { display: inline-block; justify-self: start; white-space: nowrap; transform: scaleX(.949); transform-origin: left; margin-left: -1px; }
  .group { display: grid; gap: 1px; margin-bottom: 34px; }
  .row { height: 37px; display: grid; grid-template-columns: 579px 271px 1fr; align-items: center; }
  .row svg { justify-self: end; margin-top: 6px; }
  .field { background: #fff; border: 1px solid #ddd; border-radius: 2px; height: 37px; line-height: 35px; color: #333; font-size: 21.800px; }
  .quiz button { display: block; margin: -14px 0 0 579px; width: 239px; height: 48px; border: 0; border-radius: 2px; background: #43a52b; color: #fff; font: 700 21.400px Lato, sans-serif; padding: 0 0 1px; }
  .steps { display: flex; gap: 17.500px; margin: 25px 0 0 95px; }
  .steps i { width: 50px; height: 30px; background: #268a0f; }

  .track { width: 12px; height: 939px; padding: 3px 2px 0 5px; }
  .thumb { width: 5px; height: 404px; border-radius: 3px; background: #757575; }

  .anchor { position: absolute; left: 0; right: 12px; bottom: 0; height: 154px; }
  .collapse { width: 57px; height: 26px; background: #fafafa; border-radius: 3px 6px 0 0; box-shadow: 1px -1px 2px rgba(0, 0, 0, .25); display: grid; place-items: center; padding-top: 3px; }
  .strip { height: 5px; margin-top: -1px; background: #fafafa; box-shadow: 0 -1px 4px rgba(0, 0, 0, .2); position: relative; }
  .adrow { background: #fafafa; height: 124px; box-shadow: inset 0 2px 2px rgba(0, 0, 0, .12); padding-left: 415px; }
  .ad { width: 1005px; height: 124px; background: #fff; border: 1px solid #dcdcdc; display: flex; position: relative; padding-left: 46px; font-family: "DejaVu Sans", sans-serif; }
  .big { font-size: 27.500px; fill: #333; }
  .sub { font-size: 14px; fill: #6b6b6b; }
  .open { width: 186px; height: 35px; margin: 43px 0 0 13px; border-radius: 3px; background: #0689ff; color: #fff; font-size: 13.300px; line-height: 34px; text-align: center; box-shadow: 0 5px 9px rgba(30, 50, 90, .4); }
  .choices { position: absolute; right: 1px; top: 0; }
</style>
